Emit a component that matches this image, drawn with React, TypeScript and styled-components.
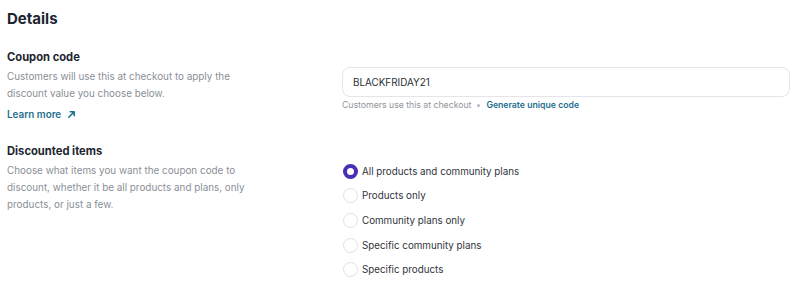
import React from "react";
import styled, { createGlobalStyle } from "styled-components";

const Global = createGlobalStyle`
  html, body { margin: 0; padding: 0; background: #fff; }
  body { font-family: Inter, "Noto Sans", sans-serif; color: #1f2328; -webkit-font-smoothing: antialiased; }
`;

const Page = styled.div`
  padding: 9px 10px 0 7px;
  display: flex;
  flex-direction: column;
`;

const Title = styled.h1`
  margin: 0;
  font-size: 15px;
  font-weight: 700;
  line-height: 20px;
  color: #1d2530;
`;

const Section = styled.section<{ $top: number }>`
  display: grid;
  grid-template-columns: 335px 1fr;
  margin-top: ${(p) => p.$top}px;
`;

const Info = styled.div`
  display: flex;
  flex-direction: column;
  align-items: flex-start;
`;

const Heading = styled.h2`
  margin: 0;
  font-size: 11.2px;
  font-weight: 700;
  line-height: 18px;
  color: #1d2530;
`;

const Desc = styled.p`
  margin: 2px 0 0;
  font-size: 9.9px;
  line-height: 17px;
  color: #8a8f97;
  max-width: 262px;
`;

const Link = styled.a`
  margin-top: 4px;
  display: inline-flex;
  align-items: center;
  gap: 6px;
  font-size: 9.9px;
  font-weight: 600;
  color: #1f6f8f;
  text-decoration: none;
  line-height: 17px;
`;

const Field = styled.div`
  display: flex;
  flex-direction: column;
  padding-top: 19px;
`;

const Input = styled.div`
  height: 30px;
  box-sizing: border-box;
  border: 1px solid #e3e5e8;
  border-radius: 8px;
  display: flex;
  align-items: center;
  padding: 0 10px;
  font-size: 9.9px;
  color: #2a2f36;
`;

const Help = styled.div`
  margin-top: 1px;
  display: flex;
  align-items: center;
  gap: 6px;
  font-size: 8.7px;
  line-height: 14px;
  color: #8f949b;
`;

const Dot = styled.span`
  width: 3px;
  height: 3px;
  border-radius: 50%;
  background: #b4b8bd;
`;

const Gen = styled.span`
  color: #1f6f8f;
  font-weight: 600;
`;

const Radios = styled.div`
  display: flex;
  flex-direction: column;
  gap: 8px;
  padding-top: 21px;
  padding-left: 1px;
`;

const Option = styled.label`
  display: flex;
  align-items: center;
  gap: 4px;
  height: 16.6px;
  font-size: 9.8px;
  color: #2f343b;
`;

const Circle = styled.span<{ $on: boolean }>`
  width: 15px;
  height: 15px;
  box-sizing: border-box;
  border-radius: 50%;
  border: ${(p) => (p.$on ? "4px solid #4a2fb5" : "1px solid #dfe1e4")};
  background: #fff;
  flex: none;
`;

const options = [
  "All products and community plans",
  "Products only",
  "Community plans only",
  "Specific community plans",
  "Specific products",
];

export default function App() {
  return (
    <>
      <Global />
      <Page>
        <Title>Details</Title>
        <Section $top={19}>
          <Info>
            <Heading>Coupon code</Heading>
            <Desc>Customers will use this at checkout to apply the discount value you choose below.</Desc>
            <Link href="#">
              Learn more
              <svg width="9" height="9" viewBox="0 0 10 10" fill="none" stroke="#1f6f8f" strokeWidth="1.7" strokeLinecap="round" strokeLinejoin="round">
                <path d="M2 8L8 2M3.5 2H8V6.5" />
              </svg>
            </Link>
          </Info>
          <Field>
            <Input>BLACKFRIDAY21</Input>
            <Help>
              Customers use this at checkout <Dot /> <Gen>Generate unique code</Gen>
            </Help>
          </Field>
        </Section>
        <Section $top={19}>
          <Info>
            <Heading>Discounted items</Heading>
            <Desc>Choose what items you want the coupon code to discount, whether it be all products and plans, only products, or just a few.</Desc>
          </Info>
          <Radios>
            {options.map((o, i) => (
              <Option key={o}>
                <Circle $on={i === 0} />
                {o}
              </Option>
            ))}
          </Radios>
        </Section>
      </Page>
    </>
  );
}
